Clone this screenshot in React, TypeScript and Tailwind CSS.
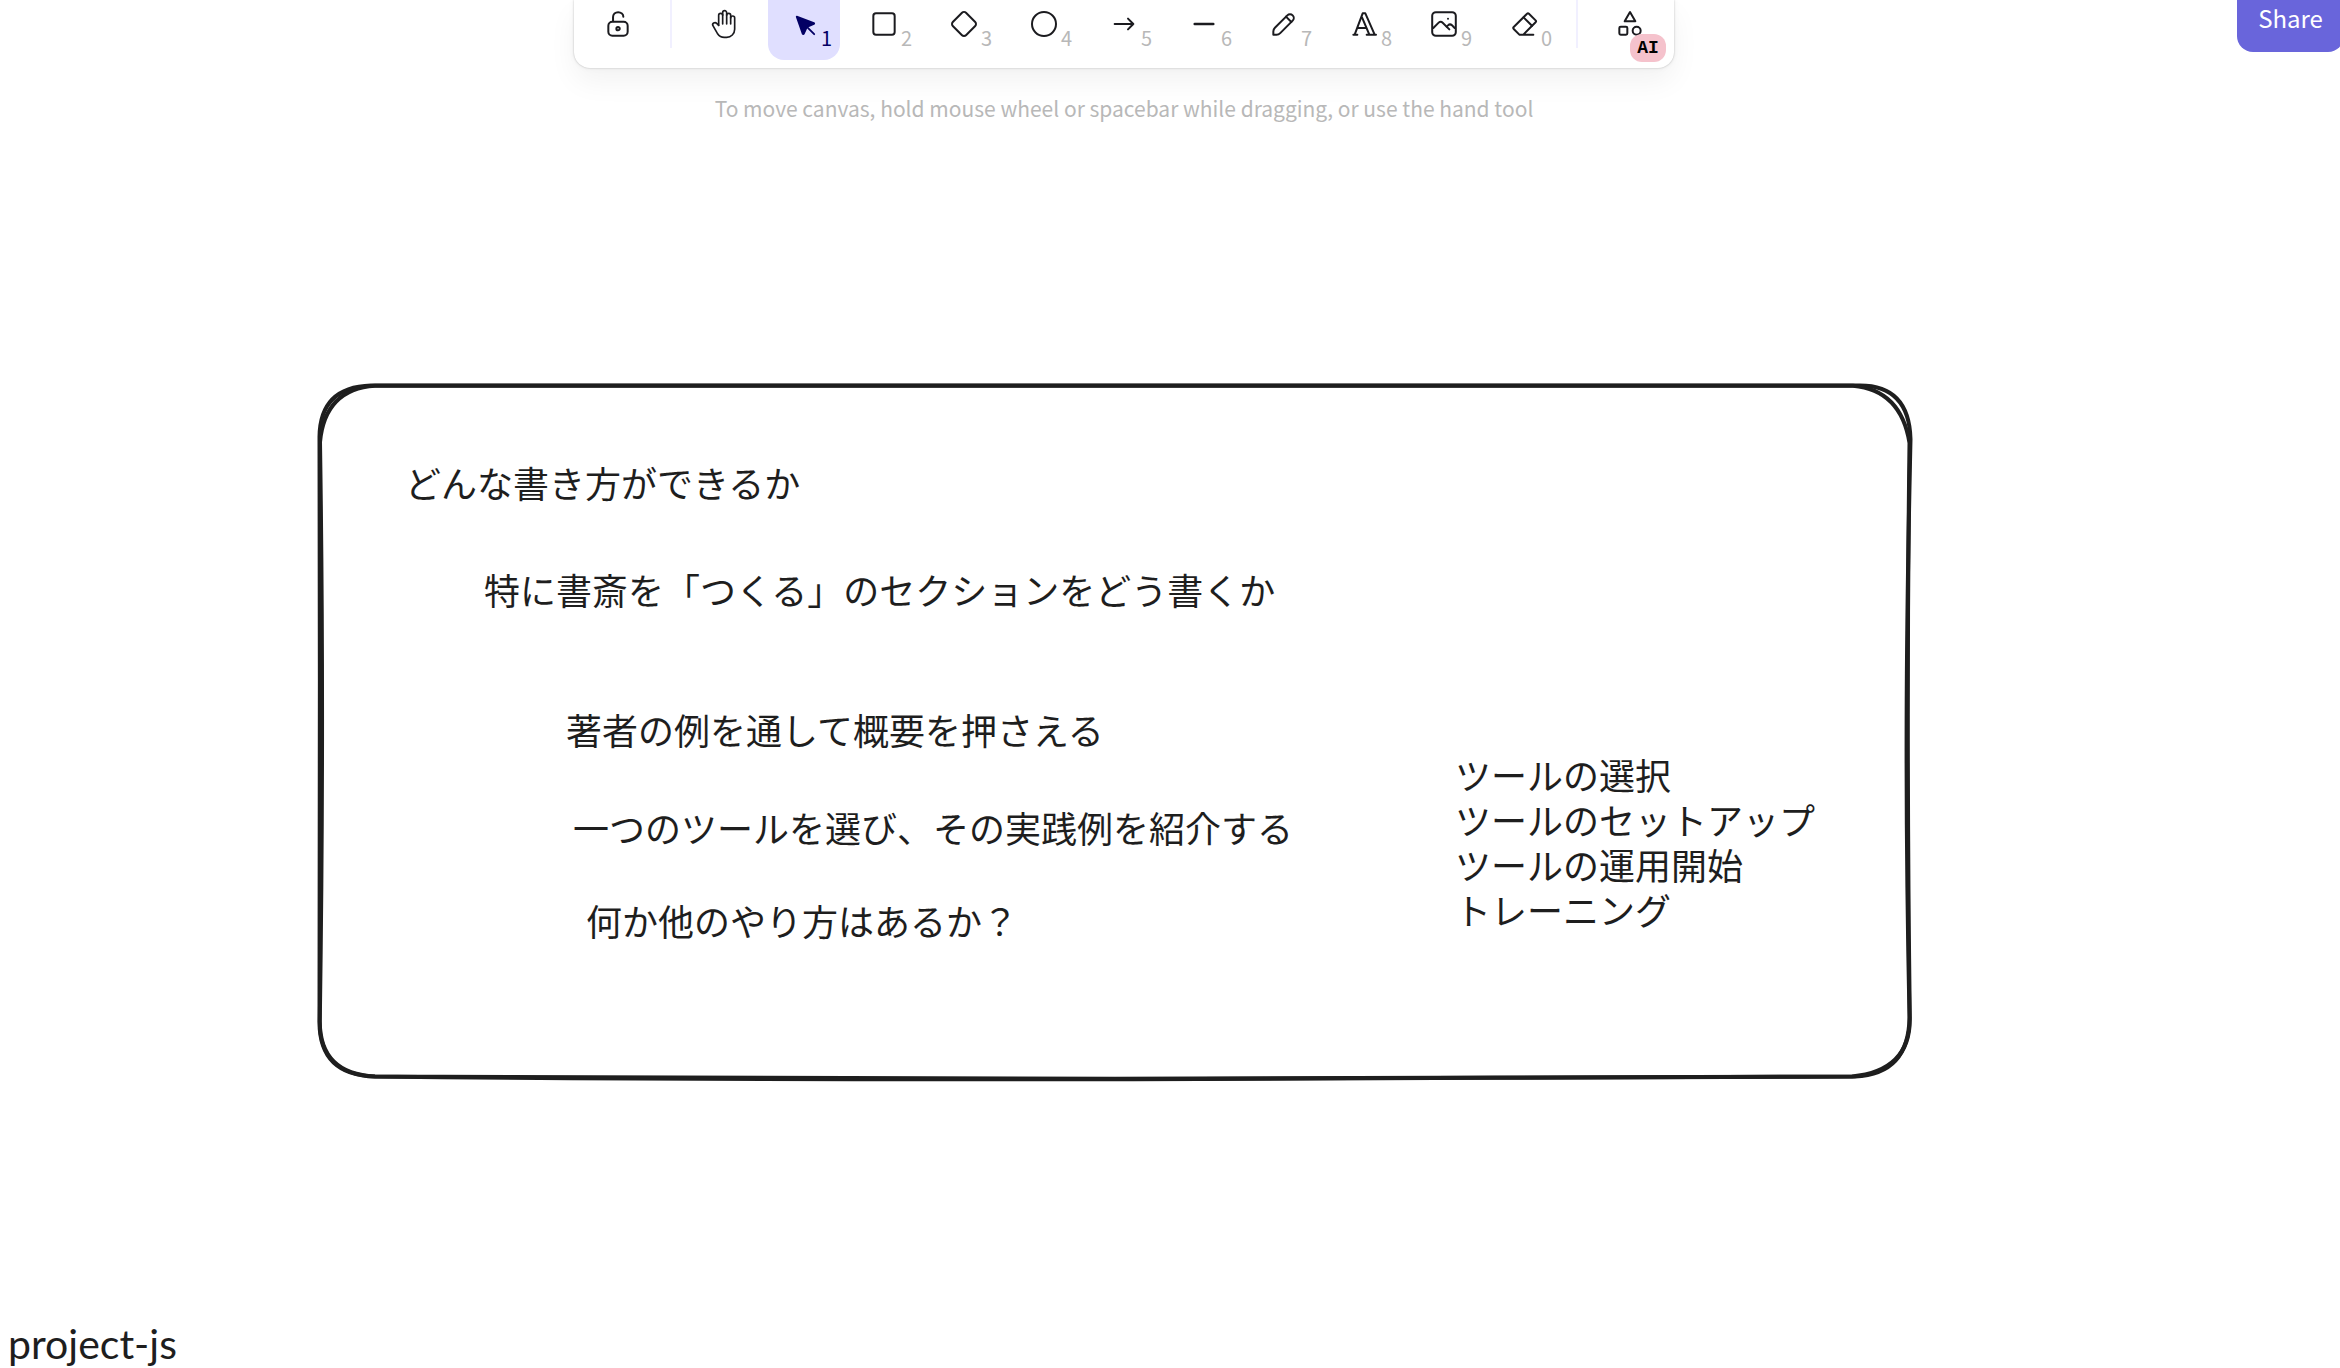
import type { ReactNode } from "react";

type IconProps = { box: number; stroke: number; filled?: boolean; children: ReactNode };

function Icon({ box, stroke, filled, children }: IconProps) {
  return (
    <svg
      viewBox={`0 0 ${box} ${box}`}
      className="size-8"
      fill={filled ? "currentColor" : "none"}
      stroke="currentColor"
      strokeWidth={stroke}
      strokeLinecap="round"
      strokeLinejoin="round"
      aria-hidden="true"
    >
      {children}
    </svg>
  );
}

const tools: { label: string; hint?: string; active?: boolean; icon: ReactNode }[] = [
  {
    label: "Hand",
    icon: (
      <Icon box={24} stroke={1.25}>
        <path d="M8 13v-7.5a1.5 1.5 0 0 1 3 0v6.5" />
        <path d="M11 5.5v-2a1.5 1.5 0 1 1 3 0v8.5" />
        <path d="M14 5.5a1.5 1.5 0 0 1 3 0v6.5" />
        <path d="M17 7.5a1.5 1.5 0 0 1 3 0v8.5a6 6 0 0 1 -6 6h-2h.208a6 6 0 0 1 -5.012 -2.7a69.74 69.74 0 0 1 -.196 -.3c-.312 -.479 -1.407 -2.388 -3.286 -5.728a1.5 1.5 0 0 1 .536 -2.022a1.867 1.867 0 0 1 2.28 .28l1.47 1.47" />
      </Icon>
    ),
  },
  {
    label: "Selection",
    hint: "1",
    active: true,
    icon: (
      <Icon box={22} stroke={1.25} filled>
        <path d="M6 6l4.153 11.793a0.365 .365 0 0 0 .331 .207a0.366 .366 0 0 0 .332 -.207l2.184 -4.793l4.787 -1.994a0.355 .355 0 0 0 .213 -.323a0.355 .355 0 0 0 -.213 -.323l-11.787 -4.36z" />
        <path d="M13.5 13.5l4.5 4.5" />
      </Icon>
    ),
  },
  {
    label: "Rectangle",
    hint: "2",
    icon: (
      <Icon box={24} stroke={1.5}>
        <rect x="4" y="4" width="16" height="16" rx="2" />
      </Icon>
    ),
  },
  {
    label: "Diamond",
    hint: "3",
    icon: (
      <Icon box={24} stroke={1.5}>
        <path d="M10.5 20.4l-6.9 -6.9c-.781 -.781 -.781 -2.219 0 -3l6.9 -6.9c.781 -.781 2.219 -.781 3 0l6.9 6.9c.781 .781 .781 2.219 0 3l-6.9 6.9c-.781 .781 -2.219 .781 -3 0z" />
      </Icon>
    ),
  },
  {
    label: "Ellipse",
    hint: "4",
    icon: (
      <Icon box={24} stroke={1.5}>
        <circle cx="12" cy="12" r="9" />
      </Icon>
    ),
  },
  {
    label: "Arrow",
    hint: "5",
    icon: (
      <Icon box={24} stroke={1.5}>
        <path d="M5 12h14M15 16l4 -4M15 8l4 4" />
      </Icon>
    ),
  },
  {
    label: "Line",
    hint: "6",
    icon: (
      <Icon box={20} stroke={1.5}>
        <path d="M4.167 10h11.666" />
      </Icon>
    ),
  },
  {
    label: "Draw",
    hint: "7",
    icon: (
      <Icon box={20} stroke={1.25}>
        <path d="m7.643 15.69 7.774-7.773a2.357 2.357 0 1 0-3.334-3.334L4.31 12.357a3.333 3.333 0 0 0-.977 2.357v1.953h1.953c.884 0 1.732-.352 2.357-.977Z" />
        <path d="m11.25 5.417 3.333 3.333" />
      </Icon>
    ),
  },
  {
    label: "Text",
    hint: "8",
    icon: (
      <Icon box={24} stroke={1.5}>
        <path d="M4 20h3M14 20h7M6.9 15h6.9M10.2 6.3l5.8 13.7M5 20l6 -16h2l7 16" />
      </Icon>
    ),
  },
  {
    label: "Insert image",
    hint: "9",
    icon: (
      <Icon box={20} stroke={1.25}>
        <path d="M12.5 6.667h.01" />
        <path d="M4.91 2.625h10.18a2.284 2.284 0 0 1 2.285 2.284v10.182a2.284 2.284 0 0 1-2.284 2.284H4.909a2.284 2.284 0 0 1-2.284-2.284V4.909a2.284 2.284 0 0 1 2.284-2.284Z" />
        <path d="m3.333 12.5 3.334-3.333c.773-.745 1.726-.745 2.5 0l4.166 4.166" />
        <path d="m11.667 11.667.833-.834c.774-.744 1.726-.744 2.5 0l1.667 1.667" />
      </Icon>
    ),
  },
  {
    label: "Eraser",
    hint: "0",
    icon: (
      <Icon box={24} stroke={1.5}>
        <path d="M19 20h-10.5l-4.21 -4.3a1 1 0 0 1 0 -1.41l10 -10a1 1 0 0 1 1.41 0l5 5a1 1 0 0 1 0 1.41l-9.2 9.3" />
        <path d="M18 13.3l-6.3 -6.3" />
      </Icon>
    ),
  },
];

function ToolButton({ label, hint, active, children }: { label: string; hint?: string; active?: boolean; children: ReactNode }) {
  return (
    <button
      type="button"
      aria-label={label}
      aria-pressed={active}
      className={
        active
          ? "relative flex h-15 w-18 justify-center rounded-b-2xl bg-[#e0dfff] pt-2 text-[#030064]"
          : "relative flex h-15 w-18 justify-center rounded-b-2xl pt-2 text-[#1b1b1f]"
      }
    >
      {children}
      {hint && (
        <span className={active ? "absolute right-2 bottom-2 text-xl leading-7" : "absolute right-2 bottom-2 text-xl leading-7 text-[#b8b8b8]"}>
          {hint}
        </span>
      )}
    </button>
  );
}

function Divider() {
  return <div className="mx-2 h-12 w-0.5 bg-[#f1f0ff]" />;
}

function Toolbar() {
  return (
    <div
      role="toolbar"
      aria-label="Shapes"
      className="flex gap-2 rounded-b-2xl bg-white px-2 pb-2 shadow-[0_0_2px_rgba(0,0,0,0.25),0_0_6px_rgba(0,0,0,0.05),0_14px_28px_rgba(0,0,0,0.05)]"
    >
      <ToolButton label="Keep selected tool active after drawing">
        <Icon box={20} stroke={1.25}>
          <path d="M13.542 8.542H6.458a2.5 2.5 0 0 0-2.5 2.5v3.75a2.5 2.5 0 0 0 2.5 2.5h7.084a2.5 2.5 0 0 0 2.5-2.5v-3.75a2.5 2.5 0 0 0-2.5-2.5Z" />
          <path d="M10 13.958a1.042 1.042 0 1 0 0-2.083 1.042 1.042 0 0 0 0 2.083Z" />
          <path d="M6.9 8.333V5.6C6.9 3.9 8.3 2.6 10.1 2.6c1.8 0 3.233 1.3 3.233 2.9" />
        </Icon>
      </ToolButton>
      <Divider />
      {tools.map((t) => (
        <ToolButton key={t.label} label={t.label} hint={t.hint} active={t.active}>
          {t.icon}
        </ToolButton>
      ))}
      <Divider />
      <ToolButton label="More tools">
        <Icon box={24} stroke={1.5}>
          <path d="M12 3l-4 7h8z" />
          <circle cx="17" cy="17" r="3" />
          <rect x="4" y="14" width="6" height="6" rx="1" />
        </Icon>
        <span className="absolute right-0 -bottom-0.5 flex h-7 w-9 items-center justify-center rounded-xl bg-[#f5c2cc] font-['Liberation_Mono',monospace] text-lg font-bold text-black">
          AI
        </span>
      </ToolButton>
    </div>
  );
}

/* Hand-sketched rounded frame: two slightly diverging passes of the same outline. */
function Frame() {
  return (
    <svg
      viewBox="0 0 1600 704"
      className="absolute top-[381px] left-[315px] h-[704px] w-[1600px]"
      fill="none"
      stroke="#1e1e1e"
      strokeWidth="4"
      strokeLinecap="round"
      aria-hidden="true"
    >
      <path d="M56 4.5C500 4 1000 4 1544 4.5Q1594 4 1595.500 58C1591 260 1590 420 1594.500 636Q1594 693 1540 695.500C1000 699 600 698 60 695.500Q4 694 4.500 640C5 420 5 260 4.500 56Q5 6 56 4.500" />
      <path d="M60 4.800C500 9 1000 8 1538 4.800Q1586 9 1594.500 62C1592 260 1592 420 1594.800 636Q1596 690 1537 695.500C1000 697 600 701 60 695.500Q4.500 693 4.800 640C8 420 8 260 5 61Q10 8 60 4.800" />
    </svg>
  );
}

const notes: { place: string; text: string }[] = [
  { place: "left-[405px] top-[460px]", text: "どんな書き方ができるか" },
  { place: "left-[484px] top-[567px]", text: "特に書斎を「つくる」のセクションをどう書くか" },
  { place: "left-[566px] top-[707px]", text: "著者の例を通して概要を押さえる" },
  { place: "left-[573px] top-[805px]", text: "一つのツールを選び、その実践例を紹介する" },
  { place: "left-[586px] top-[898px]", text: "何か他のやり方はあるか？" },
  {
    place: "left-[1455px] top-[752px]",
    text: "ツールの選択\nツールのセットアップ\nツールの運用開始\nトレーニング",
  },
];

export default function App() {
  return (
    <div className="relative flex min-h-screen flex-col overflow-hidden bg-white font-['Noto_Sans_CJK_JP',sans-serif]">
      <header className="relative z-10 flex items-start">
        <div className="flex flex-1 flex-col items-center">
          <Toolbar />
          <p className="mt-6 text-[21px] leading-8 text-[#b8b8b8]">
            To move canvas, hold mouse wheel or spacebar while dragging, or use the hand tool
          </p>
        </div>
        <div className="w-[92px]">
          <button type="button" className="-ml-[11px] flex h-13 w-[107px] justify-center rounded-b-2xl bg-[#6965db] text-2xl leading-[35px] text-white">
            Share
          </button>
        </div>
      </header>
      <main className="flex-1 text-[36px] leading-[45px] text-[#1e1e1e]">
        <Frame />
        {notes.map((n) => (
          <p key={n.place} className={`absolute whitespace-pre ${n.place}`}>
            {n.text}
          </p>
        ))}
        <p className="absolute bottom-0 left-2 font-['Excalifont','Virgil','Lato',cursive] text-[41px] leading-[48px]">project-js</p>
      </main>
    </div>
  );
}
